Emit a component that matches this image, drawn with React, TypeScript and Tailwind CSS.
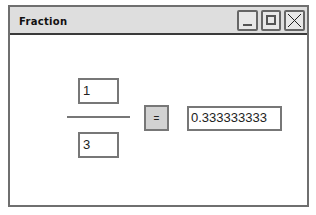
import React from "react";

export default function App() {
  return (
    <div className="w-[316px] h-[215px] bg-white relative overflow-hidden">
      <div className="ml-[8px] mt-[5px] w-[301px] h-[202px] border-2 border-[#6f6f6f] flex flex-col bg-white">
        <div className="h-[28px] bg-[#dedede] border-b-2 border-[#3a3a3a] flex items-center justify-between pl-[9px] pr-[2px]">
          <span
            className="text-[10px] font-bold text-[#111] tracking-[0.3px] mt-[3px]"
            style={{ fontFamily: '"Comic Sans MS", "DejaVu Sans", sans-serif' }}
          >
            Fraction
          </span>
          <div className="flex gap-[3px] items-center">
            <div className="w-[21px] h-[21px] border-2 border-[#666] rounded-[2px] bg-[#e8e8e8] flex items-end justify-center pb-[3px]">
              <div className="w-[9px] h-[2px] bg-[#555]" />
            </div>
            <div className="w-[20px] h-[21px] border-2 border-[#666] rounded-[2px] bg-[#e8e8e8] flex items-center justify-center">
              <div className="w-[10px] h-[10px] border-2 border-[#555]" />
            </div>
            <div className="w-[21px] h-[21px] border-2 border-[#666] rounded-[2px] bg-[#e8e8e8] flex items-center justify-center">
              <svg width="15" height="15" viewBox="0 0 15 15">
                <path d="M1 1 L14 14 M14 1 L1 14" stroke="#222" strokeWidth="1" fill="none" />
              </svg>
            </div>
          </div>
        </div>
        <div
          className="flex items-center pt-[43px] pl-[57px]"
          style={{ fontFamily: '"Liberation Sans", Arial, sans-serif' }}
        >
          <div className="w-[63px] flex flex-col items-center">
            <div className="w-[41px] h-[26px] border-2 border-[#777] flex items-center pl-[3px] text-[13px] text-[#222]">
              1
            </div>
            <div className="w-[63px] h-[2px] bg-[#777] mt-[12px] mb-[14px]" />
            <div className="w-[41px] h-[26px] border-2 border-[#777] flex items-center pl-[3px] text-[13px] text-[#222]">
              3
            </div>
          </div>
          <div className="ml-[14px] w-[25px] h-[26px] border-2 border-[#777] bg-[#d2d2d2] flex items-center justify-center text-[10px] text-[#222]">
            =
          </div>
          <div className="ml-[18px] w-[95px] h-[25px] border-2 border-[#777] flex items-center pl-[2px] text-[13px] text-[#222]">
            0.333333333
          </div>
        </div>
      </div>
    </div>
  );
}
